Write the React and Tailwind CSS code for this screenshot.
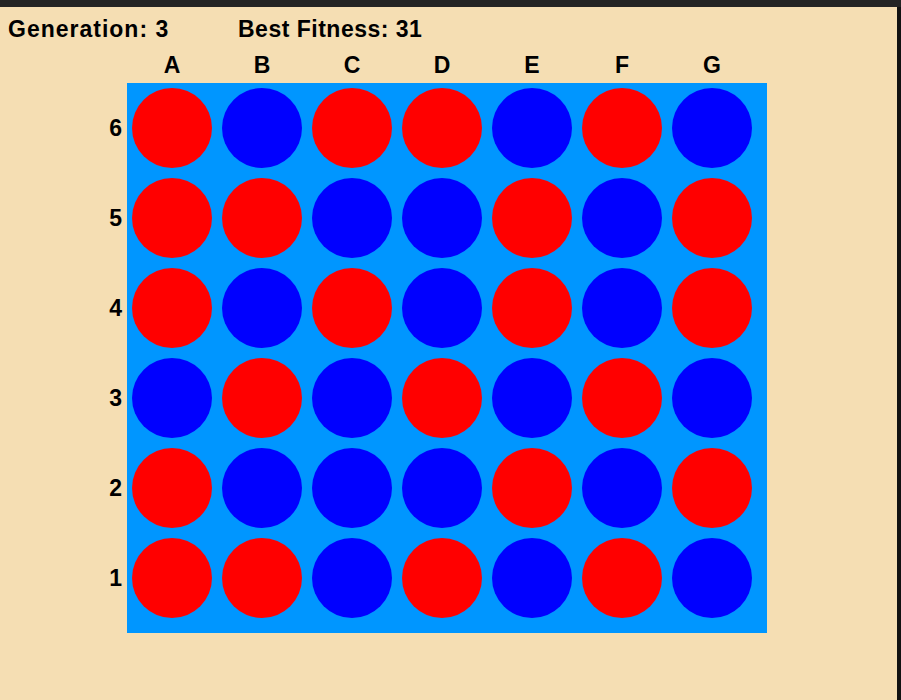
const ROWS = [
  ['R', 'B', 'R', 'R', 'B', 'R', 'B'],
  ['R', 'R', 'B', 'B', 'R', 'B', 'R'],
  ['R', 'B', 'R', 'B', 'R', 'B', 'R'],
  ['B', 'R', 'B', 'R', 'B', 'R', 'B'],
  ['R', 'B', 'B', 'B', 'R', 'B', 'R'],
  ['R', 'R', 'B', 'R', 'B', 'R', 'B'],
]
const COLS = ['A', 'B', 'C', 'D', 'E', 'F', 'G']
const LABELS = ['6', '5', '4', '3', '2', '1']

export default function App() {
  return (
    <div
      className="w-[901px] h-[700px] flex flex-col overflow-hidden text-black"
      style={{ fontFamily: '"Liberation Sans", Arial, sans-serif' }}
    >
      <div className="h-[7px] bg-[#242424]" />
      <div className="flex flex-1">
        <main className="flex-1 bg-[#f5deb3] pt-[11px] pl-[8px]">
          {/* Stats */}
          <div className="flex text-[23px] leading-none font-bold">
            <span className="w-[230px] tracking-[1px]">Generation: 3</span>
            <span className="tracking-[0.5px]">Best Fitness: 31</span>
          </div>

          {/* Column letters */}
          <div className="flex ml-[119px] mt-[13px] text-[23px] leading-none font-bold">
            {COLS.map((c) => (
              <div key={c} className="w-[90px] text-center">{c}</div>
            ))}
          </div>

          {/* Board */}
          <div className="flex mt-[6px]">
            <div className="w-[119px] flex flex-col pr-[5px] text-[23px] font-bold">
              {LABELS.map((l) => (
                <div key={l} className="h-[90px] flex items-center justify-end">{l}</div>
              ))}
            </div>
            <div className="w-[640px] h-[550px] bg-[#0096ff]">
              <div className="grid grid-cols-[repeat(7,90px)] grid-rows-[repeat(6,90px)]">
                {ROWS.flatMap((row, r) =>
                  row.map((cell, c) => (
                    <div key={`${r}-${c}`} className="flex items-center justify-center">
                      <div
                        className={`w-[80px] h-[80px] rounded-full ${
                          cell === 'R' ? 'bg-[#ff0000]' : 'bg-[#0000ff]'
                        }`}
                      />
                    </div>
                  ))
                )}
              </div>
            </div>
          </div>
        </main>
        <div className="w-[4px] bg-[#121212]" />
      </div>
    </div>
  )
}
